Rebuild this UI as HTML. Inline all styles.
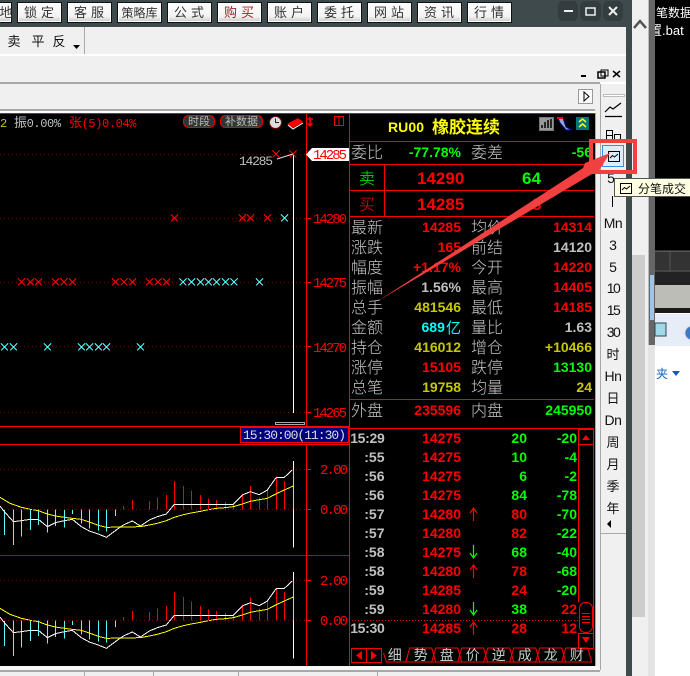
<!DOCTYPE html>
<html><head><meta charset="utf-8"><style>
html,body{margin:0;padding:0;background:#f0f0f0;width:690px;height:676px;overflow:hidden}
svg{display:block}
text{font-family:"Liberation Mono","Noto Sans CJK SC",monospace;white-space:pre}
.z{font-family:"Liberation Sans","Noto Sans CJK SC",sans-serif;font-size:16px;fill:#c8c8c8;font-weight:300}
.n{font-family:"Liberation Sans",sans-serif;font-size:14px;font-weight:bold}
.l{font-size:14px;fill:#f00}
.b{font-family:"Liberation Sans","Noto Sans CJK SC",sans-serif;font-size:13px;fill:#333;text-anchor:middle;letter-spacing:4px}
.t{font-family:"Liberation Sans","Noto Sans CJK SC",sans-serif;font-size:13px;fill:#111;text-anchor:middle}
.m{font-family:"Liberation Sans",sans-serif;font-size:14px;fill:#111;text-anchor:middle}
.tab{font-family:"Liberation Sans","Noto Sans CJK SC",sans-serif;font-size:14px;fill:#c8c8c8;text-anchor:middle}
.r{fill:#f00}.g{fill:#0f0}.y{fill:#c8c800}.w{fill:#c0c0c0}.c{fill:#0ff}
.e{text-anchor:end}
</style></head><body>
<svg xmlns="http://www.w3.org/2000/svg" width="690" height="676" viewBox="0 0 690 676">
<defs>
<clipPath id="fr"><rect x="655" y="0" width="35" height="50"/></clipPath>
<linearGradient id="bt" x1="0" y1="0" x2="0" y2="1"><stop offset="0" stop-color="#fff"/><stop offset=".7" stop-color="#f2f2f2"/><stop offset="1" stop-color="#c4c4c4"/></linearGradient>
<g id="xr" stroke="#f00" stroke-width="1" shape-rendering="crispEdges"><path d="M-3.5-3.5 3.5 3.5M3.5-3.5-3.5 3.5"/></g>
<g id="xc" stroke="#4ff" stroke-width="1" shape-rendering="crispEdges"><path d="M-3.5-3.5 3.5 3.5M3.5-3.5-3.5 3.5"/></g>
<g id="ind">
<g transform="translate(0,400) scale(.33333)" fill="none" stroke-width="3" shape-rendering="crispEdges">
<path stroke="#5ff" d="M13 328V405M40 328V435M64 328V410M91 328V390M115 328V375M142 328V398M166 328V378M193 328V382M217 328V342M244 328V370M268 328V385M295 328V392M319 328V395M346 328V348M880 328V208"/>
<path stroke="#f00" d="M370 328V318M397 328V300M448 328V303M472 328V292M499 328V285M523 328V243M550 328V258M574 328V272M601 328V285M625 328V295M649 328V300M676 328V306M700 328V313M727 328V280M751 328V258M778 328V292M802 328V272M829 328V230M853 328V243"/>
<path stroke="#fff" d="M880 208V183M880 328V443"/>
<polyline stroke="#fff" points="0,318 13,335 40,365 64,362 91,358 115,358 142,380 166,368 193,362 217,358 244,380 268,393 295,402 319,412 346,392 370,375 397,363 421,378 448,360 472,350 499,342 523,313 700,313 727,285 751,275 778,284 802,270 829,232 853,232 880,207"/>
<polyline stroke="#ff0" points="0,292 30,310 64,322 91,328 115,332 142,342 166,348 193,352 217,355 244,358 268,366 295,376 319,382 370,381 421,380 448,375 472,370 499,362 523,352 550,344 574,339 601,334 625,329 649,325 676,323 700,320 727,312 751,304 778,299 802,295 829,281 853,270 880,258"/>
</g>
<path d="M0 469.5H306M0 509.5H306" stroke="#700" stroke-dasharray="1 3" shape-rendering="crispEdges"/>
<path d="M306 469.5H311M306 509.5H311" stroke="#f00" shape-rendering="crispEdges"/>
<text class="l" x="320" y="474" textLength="28">2.00</text>
<text class="l" x="320" y="514" textLength="28">0.00</text>
</g>
<g id="btn"><rect x=".5" y=".5" width="44" height="20" fill="url(#bt)" stroke="#111"/><rect x="1.5" y="1.5" width="42" height="18" fill="none" stroke="#fff"/></g>
<g id="ic" fill="none" stroke="#000"><rect x=".5" y=".5" width="11" height="10" stroke-width="1"/><path d="M2 7 4.5 4.5 6.5 6 10 3"/></g>
<path id="tb" d="M-15 14 -11 0H11L15 14Z" fill="none" stroke="#f00"/>
</defs>

<!-- top bar -->
<rect x="0" y="0" width="632" height="27" fill="#3f4a4c"/>
<use href="#btn" x="-33" y="2"/><use href="#btn" x="17" y="2"/><use href="#btn" x="67" y="2"/><use href="#btn" x="117" y="2"/><use href="#btn" x="167" y="2"/><use href="#btn" x="217" y="2"/><use href="#btn" x="267" y="2"/><use href="#btn" x="317" y="2"/><use href="#btn" x="367" y="2"/><use href="#btn" x="417" y="2"/><use href="#btn" x="467" y="2"/>
<text class="b" x="6" y="17" style="letter-spacing:0">地</text>
<text class="b" x="41" y="17">锁定</text><text class="b" x="91" y="17">客服</text><text class="b" x="139.500" y="17" style="letter-spacing:0;font-size:12px">策略库</text><text class="b" x="191" y="17">公式</text><text class="b" x="241" y="17" style="fill:#a82020">购买</text><text class="b" x="291" y="17">账户</text><text class="b" x="341" y="17">委托</text><text class="b" x="391" y="17">网站</text><text class="b" x="441" y="17">资讯</text><text class="b" x="491" y="17">行情</text>
<g shape-rendering="crispEdges"><rect x="558" y="1" width="20" height="20" rx="5" fill="#333c3e"/><rect x="580" y="1" width="21" height="20" rx="5" fill="#333c3e"/><rect x="603" y="1" width="20" height="20" rx="5" fill="#333c3e"/></g>
<path d="M564 11H573" stroke="#eee" stroke-width="2"/><rect x="586" y="8" width="9" height="7" fill="none" stroke="#eee" stroke-width="1.500"/><path d="M609 7 617 15M617 7 609 15" stroke="#eee" stroke-width="2"/>

<!-- light bands -->
<rect x="0" y="27" width="626" height="84" fill="#f0f0f0"/>
<rect x="0" y="54" width="626" height="2" fill="#fff"/>
<rect x="84" y="27" width="1" height="27" fill="#a8a8a8"/>
<rect x="0" y="82" width="600" height="2" fill="#a8a8a8"/><rect x="600" y="82" width="26" height="2" fill="#fff"/>
<rect x="0" y="109" width="600" height="2" fill="#a8a8a8"/><rect x="0" y="111" width="600" height="2" fill="#fff"/>
<text class="t" x="14" y="46">卖</text><text class="t" x="38" y="46">平</text><text class="t" x="59" y="46">反</text>
<path d="M73 45H80L76.500 49Z" fill="#000"/>
<path d="M581 76H586" stroke="#000" stroke-width="2"/><rect x="598" y="72" width="7" height="6" fill="none" stroke="#000" stroke-width="1.500"/><rect x="601" y="70" width="7" height="6" fill="none" stroke="#000"/><path d="M613 71 620 77M620 71 613 77" stroke="#000" stroke-width="1.500"/>
<rect x="578.500" y="89.500" width="14" height="14" fill="#fafafa" stroke="#999"/><path d="M584 92V101L589 96.500Z" fill="#fff" stroke="#000"/>

<!-- right toolbar + background -->
<rect x="595" y="84" width="31" height="592" fill="#f0f0f0"/>
<rect x="600" y="84" width="1" height="586" fill="#a8a8a8"/>
<rect x="600" y="533" width="26" height="1" fill="#a8a8a8"/>
<rect x="626" y="0" width="6" height="676" fill="#3f4a4c"/>
<rect x="632" y="0" width="16" height="676" fill="#f0f0f0"/>
<rect x="632" y="255" width="13" height="362" fill="#cdcdcd"/>
<path d="M634 28 640 21 646 28" fill="none" stroke="#555" stroke-width="2.500"/>
<rect x="648" y="0" width="7" height="676" fill="#666"/>
<rect x="648" y="0" width="1" height="676" fill="#bbb"/>
<rect x="650" y="275" width="4" height="45" fill="#9fc4e8"/>
<rect x="648" y="345" width="7" height="331" fill="#e4e4e4"/>
<rect x="655" y="0" width="35" height="676" fill="#fff"/>
<rect x="655" y="0" width="35" height="250" fill="#000"/>
<rect x="655" y="250" width="35" height="22" fill="#333"/>
<path d="M670 251V271M655 251.500H690M655 271H690" stroke="#555" shape-rendering="crispEdges"/>
<rect x="655" y="272" width="35" height="13" fill="#222"/>
<rect x="655" y="285" width="35" height="23" fill="#bdbdb8"/>
<rect x="655" y="308" width="35" height="5" fill="#1a1a1a"/>
<rect x="655" y="314" width="35" height="32" fill="#e6edf7"/>
<rect x="655" y="323" width="11" height="13" fill="#a0d8e8" stroke="#345"/>
<circle cx="692" cy="333" r="7" fill="#3a78c8" stroke="#ccd"/>
<text x="656" y="378" style="font-family:'Liberation Sans','Noto Sans CJK SC',sans-serif;font-size:12px;fill:#1060c0">夹</text>
<path d="M672 371H680L676 376Z" fill="#0a5cc8"/>
<g clip-path="url(#fr)">
<text x="656" y="17" style="font-family:'Liberation Sans','Noto Sans CJK SC',sans-serif;font-size:12px;fill:#fff">笔数据</text>
<text x="649" y="35" style="font-family:'Liberation Sans','Noto Sans CJK SC',sans-serif;font-size:13px;fill:#fff">置.bat</text>
</g>

<!-- toolbar glyphs -->
<rect x="603.500" y="94.500" width="21" height="2" fill="#fff" stroke="#bbb"/>
<path d="M605 112 610 107 613 109 621 103M605 116.500H622" fill="none" stroke="#000" stroke-width="1.200"/>
<path d="M606.500 130.500H612.500V140.500H606.500ZM606.500 135.500H612.500M614.500 140.500V134.500H620.500V140.500" fill="none" stroke="#000" shape-rendering="crispEdges"/>
<text class="m" x="611" y="183">5</text>
<path d="M612.500 196V207" stroke="#000"/>
<text class="m" x="613" y="228" style="letter-spacing:-.5px">Mn</text>
<text class="m" x="613" y="250">3</text><text class="m" x="613" y="272">5</text><text class="m" x="613" y="293" style="letter-spacing:-1.500px">10</text><text class="m" x="613" y="315" style="letter-spacing:-1.500px">15</text><text class="m" x="613" y="337" style="letter-spacing:-1.500px">30</text>
<text class="t" x="613" y="359">时</text>
<text class="m" x="613" y="381" style="letter-spacing:-.5px">Hn</text>
<text class="t" x="613" y="403">日</text>
<text class="m" x="613" y="425" style="letter-spacing:-.5px">Dn</text>
<text class="t" x="613" y="447">周</text><text class="t" x="613" y="469">月</text><text class="t" x="613" y="491">季</text><text class="t" x="613" y="513">年</text>
<path d="M611 520V528L607 524Z" fill="#000"/>

<!-- black main -->
<rect x="0" y="113" width="595" height="553" fill="#000"/>
<rect x="0" y="666" width="600" height="4" fill="#f8f8f8"/>
<rect x="0" y="670" width="600" height="2" fill="#a8a8a8"/>
<path d="M84.500 672V676M153.500 672V676M238.500 672V676M377.500 672V676" stroke="#a8a8a8"/>

<g shape-rendering="crispEdges">
<rect x="0" y="113" width="595" height="1" fill="#f00"/>
<path d="M0 154.500H306M0 218.500H306M0 282.500H306M0 346.500H306M0 412.500H306" stroke="#700" stroke-dasharray="1 3"/>
<path d="M306 218.500H311M306 282.500H311M306 346.500H311M306 412.500H311" stroke="#f00"/>
<rect x="306" y="113" width="1" height="313" fill="#f00"/>
<rect x="306" y="444" width="1" height="222" fill="#f00"/>
<rect x="349" y="113" width="1" height="553" fill="#f00"/>
<rect x="0" y="426" width="349" height="1" fill="#f00"/>
<rect x="0" y="444" width="349" height="1" fill="#f00"/>
<rect x="0" y="555" width="349" height="1" fill="#c00"/>
<rect x="293" y="154" width="1" height="259" fill="#fff"/>
<rect x="275.500" y="422.500" width="29" height="2" fill="none" stroke="#aaa"/>
</g>

<!-- chart top info -->
<text x="0" y="127" class="y" style="font-size:12px">2</text>
<text x="14" y="127" style="font-size:12px;letter-spacing:-.4px;fill:#c0c0c0"><tspan style="font-family:'Liberation Sans','Noto Sans CJK SC',sans-serif;font-size:13px">振</tspan>0.00%</text>
<text x="69" y="127" style="font-size:12px;letter-spacing:-.4px;fill:#f00"><tspan style="font-family:'Liberation Sans','Noto Sans CJK SC',sans-serif;font-size:13px">张</tspan>(5)0.04%</text>
<rect x="183.500" y="115.500" width="31" height="12" rx="5" fill="#333" stroke="#e00"/>
<rect x="220.500" y="115.500" width="42" height="12" rx="5" fill="#333" stroke="#e00"/>
<text x="199" y="125" text-anchor="middle" style="font-family:'Liberation Sans','Noto Sans CJK SC',sans-serif;font-size:11px;fill:#bbb">时段</text>
<text x="241.500" y="125" text-anchor="middle" style="font-family:'Liberation Sans','Noto Sans CJK SC',sans-serif;font-size:11px;fill:#bbb">补数据</text>
<circle cx="275.500" cy="122.500" r="6" fill="#ddd" stroke="#800"/><path d="M275.500 118.500V122.500H279" fill="none" stroke="#222"/>
<path d="M287 124 298 118 303 122 293 128Z" fill="#f00"/><path d="M288 125 293 129 303 123" fill="none" stroke="#fff"/>
<path d="M310 117V125M307 119H313M307.500 123 310 126 312.500 123" fill="none" stroke="#f00" stroke-width="1.500"/>
<rect x="334.500" y="116.500" width="9" height="9" fill="none" stroke="#f00"/><path d="M339 116V126" stroke="#f00"/>

<!-- x marks -->
<use href="#xr" x="276" y="154"/><use href="#xr" x="293" y="154"/>
<path d="M277 159 293 154" stroke="#ddd"/>
<text x="239" y="165" style="font-size:13px;fill:#c0c0c0" textLength="34">14285</text>
<use href="#xr" x="174.500" y="218"/><use href="#xr" x="242.500" y="218"/><use href="#xr" x="250.500" y="218"/><use href="#xr" x="267.500" y="218"/><use href="#xc" x="284.500" y="218"/>
<use href="#xr" x="21.500" y="282"/><use href="#xr" x="30.500" y="282"/><use href="#xr" x="38.500" y="282"/><use href="#xr" x="55.500" y="282"/><use href="#xr" x="64" y="282"/><use href="#xr" x="72.500" y="282"/><use href="#xr" x="115.500" y="282"/><use href="#xr" x="124" y="282"/><use href="#xr" x="132.500" y="282"/><use href="#xr" x="149.500" y="282"/><use href="#xr" x="158" y="282"/><use href="#xr" x="166.500" y="282"/>
<use href="#xc" x="183" y="282"/><use href="#xc" x="191.500" y="282"/><use href="#xc" x="200.500" y="282"/><use href="#xc" x="208.500" y="282"/><use href="#xc" x="216.500" y="282"/><use href="#xc" x="225.500" y="282"/><use href="#xc" x="234" y="282"/><use href="#xc" x="259.500" y="282"/>
<use href="#xc" x="4.500" y="347"/><use href="#xc" x="13.500" y="347"/><use href="#xc" x="47.500" y="347"/><use href="#xc" x="81.500" y="347"/><use href="#xc" x="89.500" y="347"/><use href="#xc" x="98.500" y="347"/><use href="#xc" x="106.500" y="347"/><use href="#xc" x="140.500" y="347"/>

<!-- price labels -->
<path d="M306 154.500 312 148H349V161H312Z" fill="#fff"/>
<text class="l" x="313" y="159" textLength="34">14285</text>
<text class="l" x="313" y="223" textLength="34">14280</text>
<text class="l" x="313" y="287" textLength="34">14275</text>
<text class="l" x="313" y="352" textLength="34">14270</text>
<text class="l" x="313" y="417" textLength="34">14265</text>

<rect x="240.500" y="427.500" width="108" height="15" fill="#00007f" stroke="#f00" stroke-width="1"/>
<text x="243" y="439" style="font-size:13px;fill:#ddd" textLength="103">15:30:00(11:30)</text>

<use href="#ind"/>
<use href="#ind" y="111"/>

<!-- right panel -->
<rect x="350" y="114" width="245" height="552" fill="#000"/>
<g shape-rendering="crispEdges" fill="#f00">
<rect x="595" y="113" width="1" height="553" fill="#a8a8a8"/>
<rect x="349" y="113" width="1" height="553"/>
<rect x="349" y="141" width="245" height="1"/><rect x="349" y="164" width="245" height="1"/><rect x="349" y="190" width="245" height="1"/><rect x="349" y="216" width="245" height="1"/>
<rect x="349" y="399" width="245" height="1"/><rect x="349" y="428" width="245" height="1"/>
<rect x="384" y="164" width="1" height="52"/>
</g>
<text x="388" y="132" style="font-family:'Liberation Sans',sans-serif;font-size:14px;font-weight:bold;fill:#ff0" textLength="36">RU00</text>
<text x="432" y="133" style="font-family:'Liberation Sans','Noto Sans CJK SC',sans-serif;font-size:17px;font-weight:bold;fill:#ff0">橡胶连续</text>
<rect x="539.500" y="117.500" width="14" height="13" fill="#999" stroke="#777"/><path d="M542 128V125M545 128V122M548 128V120M551 128V119" stroke="#000" stroke-width="1.500"/>
<path d="M558 118H563L566 127 572 130H566L560 123Z" fill="#9ab" stroke="#00a"/><path d="M557 118H563" stroke="#f00" stroke-width="2"/>
<rect x="576" y="117" width="13" height="13" fill="#007878"/><path d="M579 122 582.500 119 586 122M579 127 582.500 124 586 127" fill="none" stroke="#ff0" stroke-width="1.500"/>

<text class="z" x="351" y="158">委比</text><text class="z" x="471" y="158">委差</text>
<text class="n g e" x="461" y="157">-77.78%</text>
<text class="n g e" x="592" y="157">-56</text>
<text class="z" x="359" y="184" style="fill:#0f0">卖</text><text class="z" x="359" y="210" style="fill:#f00">买</text>
<text x="417" y="184" class="r" style="font-family:'Liberation Sans',sans-serif;font-size:17px;font-weight:bold">14290</text>
<text x="522" y="184" class="g" style="font-family:'Liberation Sans',sans-serif;font-size:17px;font-weight:bold">64</text>
<text x="417" y="210" class="r" style="font-family:'Liberation Sans',sans-serif;font-size:17px;font-weight:bold">14285</text>
<text x="532" y="210" class="r" style="font-family:'Liberation Sans',sans-serif;font-size:17px;font-weight:bold">8</text>

<text class="z" x="351" y="233">最新</text><text class="z" x="471" y="233">均价</text>
<text class="z" x="351" y="253">涨跌</text><text class="z" x="471" y="253">前结</text>
<text class="z" x="351" y="273">幅度</text><text class="z" x="471" y="273">今开</text>
<text class="z" x="351" y="293">振幅</text><text class="z" x="471" y="293">最高</text>
<text class="z" x="351" y="313">总手</text><text class="z" x="471" y="313">最低</text>
<text class="z" x="351" y="333">金额</text><text class="z" x="471" y="333">量比</text>
<text class="z" x="351" y="353">持仓</text><text class="z" x="471" y="353">增仓</text>
<text class="z" x="351" y="373">涨停</text><text class="z" x="471" y="373">跌停</text>
<text class="z" x="351" y="393">总笔</text><text class="z" x="471" y="393">均量</text>
<text class="z" x="351" y="416">外盘</text><text class="z" x="471" y="416">内盘</text>

<text class="n r e" x="461" y="232">14285</text><text class="n r e" x="592" y="232">14314</text>
<text class="n r e" x="461" y="252">165</text><text class="n w e" x="592" y="252">14120</text>
<text class="n r e" x="461" y="272">+1.17%</text><text class="n r e" x="592" y="272">14220</text>
<text class="n w e" x="461" y="292">1.56%</text><text class="n r e" x="592" y="292">14405</text>
<text class="n y e" x="461" y="312">481546</text><text class="n r e" x="592" y="312">14185</text>
<text x="421.500" y="332" class="n c">689</text><text x="446" y="333" style="font-family:'Liberation Sans','Noto Sans CJK SC',sans-serif;font-size:15px;fill:#0ff">亿</text><text class="n w e" x="592" y="332">1.63</text>
<text class="n y e" x="461" y="352">416012</text><text class="n y e" x="592" y="352">+10466</text>
<text class="n r e" x="461" y="372">15105</text><text class="n g e" x="592" y="372">13130</text>
<text class="n y e" x="461" y="392">19758</text><text class="n y e" x="592" y="392">24</text>
<text class="n r e" x="461" y="415">235596</text><text class="n g e" x="592" y="415">245950</text>

<!-- ticks -->
<text class="n w e" x="384.500" y="443" style="letter-spacing:-.3px">15:29</text><text class="n r e" x="461" y="443">14275</text><text class="n g e" x="527" y="443">20</text><text class="n g e" x="577" y="443">-20</text>
<text class="n w e" x="384.500" y="462">:55</text><text class="n r e" x="461" y="462">14275</text><text class="n g e" x="527" y="462">10</text><text class="n g e" x="577" y="462">-4</text>
<text class="n w e" x="384.500" y="481">:56</text><text class="n r e" x="461" y="481">14275</text><text class="n g e" x="527" y="481">6</text><text class="n g e" x="577" y="481">-2</text>
<text class="n w e" x="384.500" y="500">:56</text><text class="n r e" x="461" y="500">14275</text><text class="n g e" x="527" y="500">84</text><text class="n g e" x="577" y="500">-78</text>
<text class="n w e" x="384.500" y="519">:57</text><text class="n r e" x="461" y="519">14280</text><text class="n r e" x="527" y="519">80</text><text class="n g e" x="577" y="519">-70</text>
<text class="n w e" x="384.500" y="538">:57</text><text class="n r e" x="461" y="538">14280</text><text class="n r e" x="527" y="538">82</text><text class="n g e" x="577" y="538">-22</text>
<text class="n w e" x="384.500" y="557">:58</text><text class="n r e" x="461" y="557">14275</text><text class="n g e" x="527" y="557">68</text><text class="n g e" x="577" y="557">-40</text>
<text class="n w e" x="384.500" y="576">:58</text><text class="n r e" x="461" y="576">14280</text><text class="n r e" x="527" y="576">78</text><text class="n g e" x="577" y="576">-68</text>
<text class="n w e" x="384.500" y="595">:59</text><text class="n r e" x="461" y="595">14285</text><text class="n r e" x="527" y="595">24</text><text class="n g e" x="577" y="595">-20</text>
<text class="n w e" x="384.500" y="614">:59</text><text class="n r e" x="461" y="614">14280</text><text class="n g e" x="527" y="614">38</text><text class="n r e" x="577" y="614">22</text>
<text class="n w e" x="384.500" y="633" style="letter-spacing:-.3px">15:30</text><text class="n r e" x="461" y="633">14285</text><text class="n r e" x="527" y="633">28</text><text class="n r e" x="577" y="633">12</text>
<path d="M473.500 521V508M470 513 473.500 508 477 513M473.500 578V565M470 570 473.500 565 477 570M473.500 635V622M470 627 473.500 622 477 627" fill="none" stroke="#f00" stroke-width="1.200"/>
<path d="M473.500 545V558M470 553 473.500 558 477 553M473.500 602V615M470 610 473.500 615 477 610" fill="none" stroke="#0f0" stroke-width="1.200"/>
<path d="M349 620.500H578" stroke="#f00" stroke-dasharray="1 2" shape-rendering="crispEdges"/>

<!-- scroll -->
<g fill="none" stroke="#f00" shape-rendering="crispEdges">
<rect x="578.500" y="429.500" width="15" height="15"/>
<path d="M578.500 444V602M593.500 444V648"/>
<rect x="578.500" y="633.500" width="15" height="15"/>
</g>
<rect x="579.500" y="602.500" width="13" height="30" rx="6" fill="#000" stroke="#f00"/>
<path d="M582 613.500H590M582 616.500H590M582 619.500H590M582 622.500H590" stroke="#f00" shape-rendering="crispEdges"/>
<path d="M582 440H590L586 435Z" fill="#f00"/><path d="M582 637H590L586 643Z" fill="#f00"/>

<!-- tabs -->
<g fill="none" stroke="#f00" shape-rendering="crispEdges">
<rect x="351.500" y="648.500" width="30" height="14"/><path d="M366.500 648V663"/>
</g>
<use href="#tb" x="420.700" y="648"/><use href="#tb" x="446.700" y="648"/><use href="#tb" x="472.700" y="648"/><use href="#tb" x="498.700" y="648"/><use href="#tb" x="524.700" y="648"/><use href="#tb" x="550.700" y="648"/><use href="#tb" x="576.700" y="648"/>
<path d="M383.500 653 386.500 662H405.700L408 655" fill="none" stroke="#f00"/>
<path d="M362 651V660L356 655.500Z" fill="#f00"/><path d="M371 651V660L377 655.500Z" fill="#f00"/>
<text class="tab" x="394.700" y="660">细</text><text class="tab" x="420.700" y="660">势</text><text class="tab" x="446.700" y="660">盘</text><text class="tab" x="472.700" y="660">价</text><text class="tab" x="498.700" y="660">逆</text><text class="tab" x="524.700" y="660">成</text><text class="tab" x="550.700" y="660">龙</text><text class="tab" x="576.700" y="660">财</text>

<!-- selected icon -->
<rect x="602.500" y="145.500" width="21" height="21" fill="#dcecfa" stroke="#3a8ee0"/>
<use href="#ic" x="608" y="151"/>

<!-- annotation -->
<rect x="591" y="141" width="44" height="31" fill="none" stroke="#f24040" stroke-width="4"/>
<path d="M378 301 583 168 585 163 610 153 597 174 592 174Z" fill="#f24040"/>

<!-- tooltip -->
<rect x="614.500" y="178.500" width="80" height="18" fill="#ffffe1" stroke="#555"/>
<use href="#ic" x="620" y="183"/>
<text x="638" y="193" style="font-family:'Liberation Sans','Noto Sans CJK SC',sans-serif;font-size:12px;fill:#111">分笔成交</text>
</svg>
</body></html>
